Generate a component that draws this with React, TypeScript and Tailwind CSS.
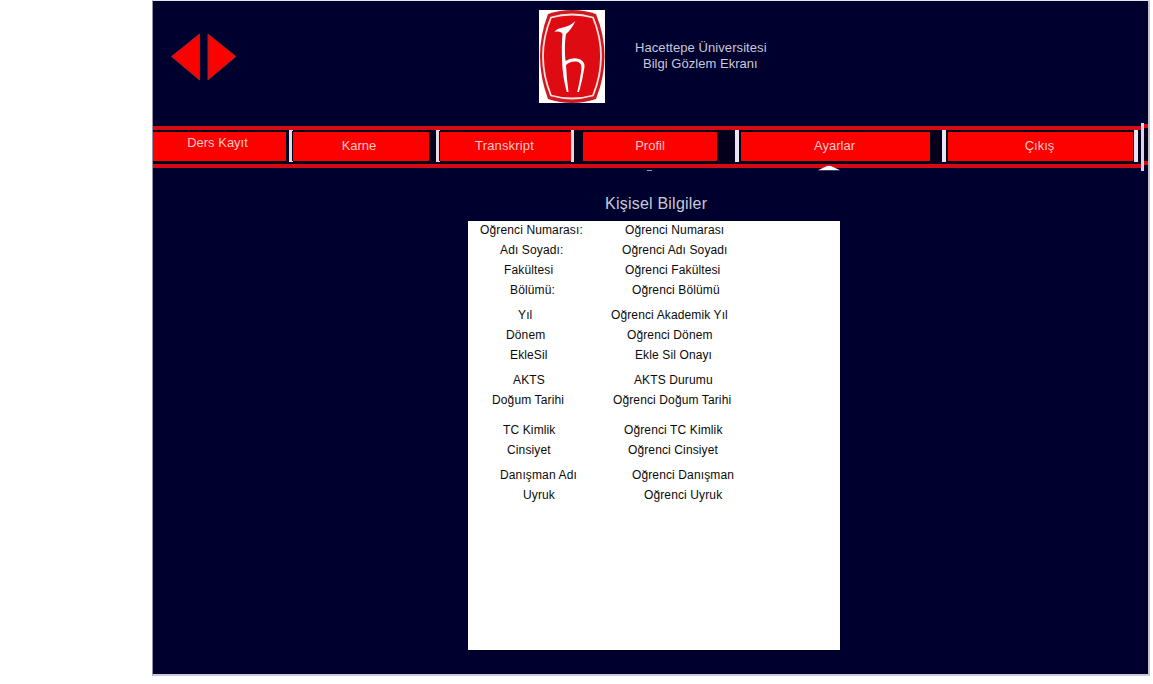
type Row = { label: string; value: string; labelPad: string; valuePad: string; gap?: string };

const rows: Row[] = [
  { label: 'Oğrenci Numarası:', value: 'Oğrenci Numarası', labelPad: 'pl-[12px]', valuePad: 'ml-[7px]' },
  { label: 'Adı Soyadı:', value: 'Oğrenci Adı Soyadı', labelPad: 'pl-[32px]', valuePad: 'ml-[4px]' },
  { label: 'Fakültesi', value: 'Oğrenci Fakültesi', labelPad: 'pl-[36px]', valuePad: 'ml-[7px]' },
  { label: 'Bölümü:', value: 'Oğrenci Bölümü', labelPad: 'pl-[42px]', valuePad: 'ml-[14px]' },
  { label: 'Yıl', value: 'Oğrenci Akademik Yıl', labelPad: 'pl-[50px]', valuePad: 'ml-[-7px]', gap: 'mt-[5px]' },
  { label: 'Dönem', value: 'Oğrenci Dönem', labelPad: 'pl-[38px]', valuePad: 'ml-[9px]' },
  { label: 'EkleSil', value: 'Ekle Sil Onayı', labelPad: 'pl-[42px]', valuePad: 'ml-[17px]' },
  { label: 'AKTS', value: 'AKTS Durumu', labelPad: 'pl-[45px]', valuePad: 'ml-[16px]', gap: 'mt-[5px]' },
  { label: 'Doğum Tarihi', value: 'Oğrenci Doğum Tarihi', labelPad: 'pl-[24px]', valuePad: 'ml-[-5px]' },
  { label: 'TC Kimlik', value: 'Oğrenci TC Kimlik', labelPad: 'pl-[35px]', valuePad: 'ml-[6px]', gap: 'mt-[10px]' },
  { label: 'Cinsiyet', value: 'Oğrenci Cinsiyet', labelPad: 'pl-[39px]', valuePad: 'ml-[10px]' },
  { label: 'Danışman Adı', value: 'Oğrenci Danışman', labelPad: 'pl-[32px]', valuePad: 'ml-[14px]', gap: 'mt-[5px]' },
  { label: 'Uyruk', value: 'Oğrenci Uyruk', labelPad: 'pl-[55px]', valuePad: 'ml-[26px]' },
];

function Arrows() {
  return (
    <svg className="ml-[17px] mt-[31px] h-[50px] w-[70px] shrink-0" viewBox="0 0 70 50">
      <path d="M1.5 24.5 L29.500 2 V48 Z M38 2 L66 24.500 L38 48 Z" fill="#fd0000" stroke="#8c2934" strokeWidth="1" />
    </svg>
  );
}

function Logo() {
  return (
    <svg className="mt-[9px] h-[93px] w-[66px] shrink-0" viewBox="0 0 66 93">
      <rect width="66" height="93" fill="#fff" />
      <path d="M9 4 Q33 -4 57 4 Q74 46 57 89 Q33 97 9 89 Q-7 46 9 4Z" fill="#cb1a22" />
      <path d="M12 7.5 Q33 1.500 54 7.500 Q70 46 54 85.500 Q33 91.500 12 85.500 Q-4 46 12 7.500Z" fill="#df0b13" stroke="#ffe0dc" strokeWidth="1.8" />
      <path d="M36.500 11 Q32 20 27 24 Q25 36 26.500 51 Q32 47.500 38 48.500 Q46 50 45.500 57 Q43.500 70 40 82 L38.300 82 Q41.500 68 42.500 58 Q42.500 52 37 51.500 Q31 51 27 55 Q27.500 68 29.500 82 L27.800 82 Q23.500 67 23 50 Q22.500 34 23.500 24 Q22 20.500 15.500 21.800 Q18 18.500 24 17.500 Q31 16 36.500 11Z" fill="#fff" />
    </svg>
  );
}

function Item({ text, box, label = '' }: { text: string; box: string; label?: string }) {
  return (
    <div className={`h-[29px] shrink-0 bg-[#fd0000] text-center text-[13px] leading-[28px] text-[#ffc9c4] ${box}`}>
      <span className={label}>{text}</span>
    </div>
  );
}

function Nav() {
  return (
    <nav className="relative mt-[23px] h-[42px] w-full shrink-0">
      <div className="h-[4px] w-[989px] bg-[#d50a14]" />
      <div className="flex h-[34px] items-start bg-[#04001c]">
        <Item text="Ders Kayıt" box="mt-[2px] w-[133px]" label="relative -left-[2px] -top-[3px]" />
        <div className="ml-[3px] h-[32px] w-[4px] border-y border-l-[3px] border-[#e2dbea]" />
        <Item text="Karne" box="mt-[2px] w-[136px]" label="relative -left-[2px]" />
        <div className="ml-[7px] h-[32px] w-[4px] border-y border-l-[3px] border-[#e2dbea]" />
        <Item text="Transkript" box="mt-[2px] w-[131px]" label="relative -left-[1px] tracking-[0.15px]" />
        <div className="h-[32px] w-[3px] bg-[#e2dbea]" />
        <Item text="Profil" box="mt-[2px] ml-[9px] w-[134px]" />
        <div className="ml-[18px] h-[32px] w-[4px] bg-[#e9e5f2]" />
        <Item text="Ayarlar" box="mt-[2px] ml-[2px] w-[189px]" label="relative -left-[1px]" />
        <div className="ml-[12px] h-[32px] w-[4px] bg-[#e9e5f2]" />
        <Item text="Çıkış" box="mt-[2px] ml-[2px] w-[185px]" label="relative -left-[1px]" />
        <div className="ml-[1px] h-[32px] w-[4px] bg-[#e9e5f2]" />
      </div>
      <div className="h-[4px] w-[989px] bg-[#d50a14]" />
      <div className="absolute -top-[3px] left-[988px] h-[48px] w-[3px] bg-[#d9d3e3]" />
      <div className="absolute -top-[2px] left-[991px] h-[4px] w-[4px] bg-[#d50a14]" />
      <div className="absolute left-[991px] top-[35px] h-[4px] w-[4px] bg-[#d50a14]" />
      <svg className="absolute left-[664px] top-[39px] h-[6px] w-[24px]" viewBox="0 0 24 6">
        <path d="M1 5.300 L9 1.500 Q12 0 15 1.500 L23 5.300 Z" fill="#fff" />
      </svg>
      <div className="absolute left-[494px] top-[44px] h-[1px] w-[5px] bg-[#9c9c85]" />
    </nav>
  );
}

export default function App() {
  return (
    <div className="flex h-[684px] w-[1153px] overflow-hidden bg-white pl-[152px] font-['Liberation_Sans',Arial,sans-serif]">
      <main className="flex h-[676px] w-[998px] flex-col border-b-2 border-l border-r-2 border-t border-b-[#cbcbd8] border-l-[#8d96aa] border-r-[#c3c3d0] border-t-[#dce8ee] bg-[#00002e]">
        <header className="flex h-[102px] shrink-0 items-start">
          <Arrows />
          <div className="ml-[299px] flex">
            <Logo />
            <div className="ml-[30px] mt-[39px] whitespace-nowrap text-[13px] leading-[16px] text-[#c9c9d8]">
              <p className="tracking-[0.07px]">Hacettepe Üniversitesi</p>
              <p className="pl-[8px] tracking-[0.03px]">Bilgi Gözlem Ekranı</p>
            </div>
          </div>
        </header>
        <Nav />
        <h1 className="mt-[26px] h-[27px] shrink-0 whitespace-nowrap pl-[452px] text-[16px] leading-[20px] tracking-[0.22px] text-[#c9c9d8]">Kişisel Bilgiler</h1>
        <section className="ml-[315px] h-[429px] w-[372px] shrink-0 bg-white text-[12px] leading-[20px] text-[#0a0a0a]">
          <dl className="relative -top-px">
            {rows.map((row) => (
              <div key={row.label} className={`flex h-[20px] whitespace-nowrap ${row.gap ?? ''}`}>
                <dt className={`w-[150px] shrink-0 tracking-[0.13px] ${row.labelPad}`}>{row.label}</dt>
                <dd className={`tracking-[0.12px] ${row.valuePad}`}>{row.value}</dd>
              </div>
            ))}
          </dl>
        </section>
      </main>
    </div>
  );
}
